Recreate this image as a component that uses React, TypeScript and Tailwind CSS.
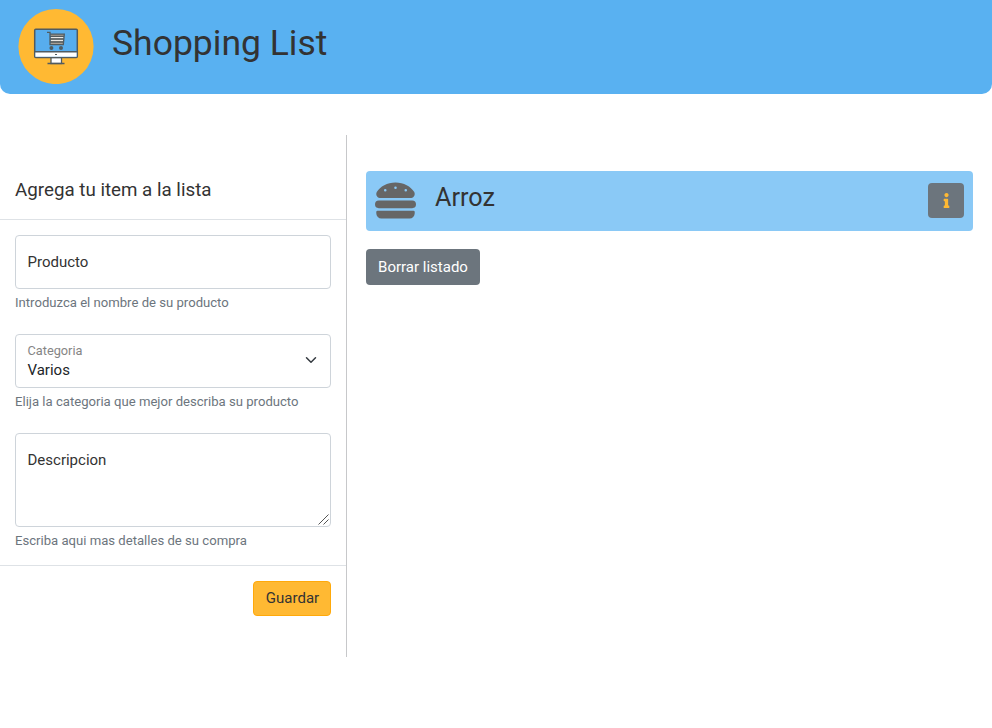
import { FaHamburger, FaInfo } from "react-icons/fa";

function Logo() {
  return (
    <svg className="block h-[76px] w-[76px]" viewBox="0 0 76 76">
      <circle cx="38" cy="38.5" r="37.6" fill="#ffb933" />
      <rect x="33" y="49.5" width="10.5" height="6" fill="#fff" stroke="#515b60" strokeWidth="1.3" />
      <rect x="16.7" y="21.3" width="42.6" height="28.2" rx="1" fill="#57adee" stroke="#515b60" strokeWidth="1.5" />
      <path d="M17.4 44h41.2v4.8H17.4z" fill="#fff" />
      <path d="M17 43.8h42M29.5 55.4h17" stroke="#515b60" strokeWidth="1.5" fill="none" />
      <path d="M37 46.5h2" stroke="#515b60" strokeWidth="1" />
      <path d="M33 26h13l-1 10H33z" fill="#aaa095" />
      <path d="M33 29.7h12.6M33 32.2h12" stroke="#fff" strokeWidth="1.1" />
      <path d="M29 24.4h3v12.2h13.3l1-10.4H32.2M32 28.4h13.5M32 31h13.2M32 34h13" stroke="#515b60" strokeWidth="1.3" fill="none" />
      <circle cx="33.4" cy="40" r="2" fill="#515b60" />
      <circle cx="43" cy="40" r="2" fill="#515b60" />
    </svg>
  );
}

export default function App() {
  return (
    <div className="h-[728px] w-[992px] overflow-hidden bg-white font-[Roboto,sans-serif] text-[15px] text-[#333]">
      <header className="flex h-[94px] rounded-b-[10px] bg-[#59b1f1] pt-[8px] pl-[18px]">
        <Logo />
        <h1 className="ml-[18px] pt-[14px] text-[35.5px] leading-[43px]">Shopping List</h1>
      </header>
      <main className="mt-[41px] flex">
        <form className="h-[522px] w-[347px] shrink-0 border-r border-[#c7c8ca]">
          <div className="h-[85px] border-b border-[#dee2e6] pt-[44px] pl-[15px]">
            <h5 className="text-[18.75px] leading-[22px]">Agrega tu item a la lista</h5>
          </div>
          <div className="h-[346px] border-b border-[#dee2e6] px-[15px] pt-[15px]">
            <div className="flex h-[54px] items-center rounded-[4px] border border-[#ced4da] px-[11.5px]">Producto</div>
            <p className="mt-[4px] h-[20px] text-[13.125px] leading-[20px] text-[#6c757d]">Introduzca el nombre de su producto</p>
            <div className="mt-[21px] flex h-[54px] justify-between rounded-[4px] border border-[#ced4da] pr-[13px] pl-[11.5px]">
              <div className="pt-[6px]">
                <div className="h-[19px] text-[12.75px] leading-[19px] text-[#858585]">Categoria</div>
                <div className="leading-[20px] text-[#212529]">Varios</div>
              </div>
              <svg className="mt-[19px] h-[12px] w-[12px]" viewBox="0 0 16 16" fill="none" stroke="#343a40" strokeWidth="2" strokeLinecap="round" strokeLinejoin="round">
                <path d="m2 5 6 6 6-6" />
              </svg>
            </div>
            <p className="mt-[4px] h-[20px] text-[13.125px] leading-[20px] text-[#6c757d]">Elija la categoria que mejor describa su producto</p>
            <div className="mt-[21px] flex h-[94px] justify-between rounded-[4px] border border-[#ced4da] pt-[15px] pr-px pl-[11.5px]">
              <span className="leading-[22px]">Descripcion</span>
              <svg className="h-[12px] w-[11px] self-end" viewBox="0 0 11 12" stroke="#555" strokeWidth="1">
                <path d="M0.5 10.5 10.5.5M5.5 10.5 10.5 5.5" />
              </svg>
            </div>
            <p className="mt-[4px] h-[20px] text-[13.125px] leading-[20px] text-[#6c757d]">Escriba aqui mas detalles de su compra</p>
          </div>
          <div className="flex justify-end px-[15px] pt-[15px]">
            <button type="button" className="h-[35px] w-[78px] rounded-[4px] border border-[#ffa90a] bg-[#ffb933] pl-px">Guardar</button>
          </div>
        </form>
        <section className="flex-1 pt-[36px] pr-[19px] pl-[19px]">
          <div className="flex h-[60px] rounded-[4px] bg-[#8ac9f6] pr-[9px] pl-[9px]">
            <FaHamburger className="mt-[9px] h-[41px] w-[41px] text-[#666]" />
            <h4 className="ml-[19px] pt-[12px] text-[25.2px] leading-[30px]">Arroz</h4>
            <button type="button" className="mt-[12px] ml-auto flex h-[35px] w-[36px] items-center justify-center rounded-[4px] bg-[#6c757d] text-[#ffb933]">
              <FaInfo className="h-[15px] w-[15px]" />
            </button>
          </div>
          <button type="button" className="mt-[18px] h-[36px] w-[114px] rounded-[4px] bg-[#6c757d] text-white">Borrar listado</button>
        </section>
      </main>
    </div>
  );
}
